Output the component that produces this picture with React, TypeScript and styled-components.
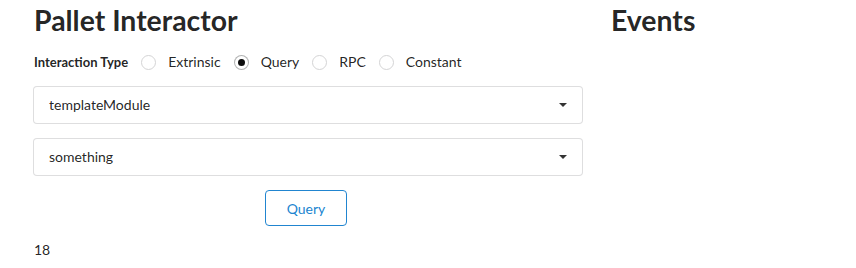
import React from "react";
import styled, { createGlobalStyle } from "styled-components";

const Global = createGlobalStyle`
  html, body { margin: 0; padding: 0; background: #fff; }
  body {
    font-family: Lato, "Helvetica Neue", Arial, sans-serif;
    font-size: 14px;
    line-height: 1.4285em;
    color: rgba(0, 0, 0, 0.87);
  }
  * { box-sizing: border-box; }
`;

const Page = styled.div`
  display: grid;
  grid-template-columns: 550px 1fr;
  column-gap: 27px;
  padding: 2px 0 0 33px;
`;

const Column = styled.div`
  display: flex;
  flex-direction: column;
`;

const Heading = styled.h1`
  margin: 0 0 14px 1px;
  font-size: 28.4px;
  line-height: 36px;
  font-weight: 700;
  color: rgba(0, 0, 0, 0.87);
`;

const InlineFields = styled.div`
  display: flex;
  align-items: center;
  margin: 0 0 14px 1px;
  height: 20px;
`;

const FieldLabel = styled.span`
  font-size: 13px;
  font-weight: 700;
  margin-right: 13px;
`;

const RadioItem = styled.label`
  display: flex;
  align-items: center;
  margin-right: 13px;
  font-size: 14px;
  cursor: pointer;
`;

const RadioCircle = styled.span<{ $checked?: boolean }>`
  width: 15px;
  height: 15px;
  border-radius: 50%;
  border: 1px solid ${(p) => (p.$checked ? "rgba(34,36,38,.35)" : "#d4d4d5")};
  background: #fff;
  display: flex;
  align-items: center;
  justify-content: center;
  margin-right: 12px;
  &::after {
    content: "";
    width: 7px;
    height: 7px;
    border-radius: 50%;
    background: rgba(0, 0, 0, 0.95);
    display: ${(p) => (p.$checked ? "block" : "none")};
  }
`;

const Dropdown = styled.div`
  display: flex;
  align-items: center;
  justify-content: space-between;
  height: 38px;
  padding: 0 15px 0 15px;
  border: 1px solid rgba(34, 36, 38, 0.15);
  border-radius: 4px;
  margin-bottom: 14px;
  font-size: 14px;
  background: #fff;
`;

const Caret = styled.svg`
  width: 8px;
  height: 4px;
`;

const ButtonRow = styled.div`
  display: flex;
  justify-content: center;
  padding-right: 4px;
`;

const BasicButton = styled.button`
  font-family: Lato, "Helvetica Neue", Arial, sans-serif;
  font-size: 14px;
  font-weight: 400;
  height: 36px;
  padding: 0 21px;
  background: #fff;
  color: #2185d0;
  border: 1px solid #2185d0;
  border-radius: 4px;
  cursor: pointer;
`;

const Result = styled.div`
  margin-top: 14px;
  font-size: 14px;
  line-height: 20px;
  padding-left: 1px;
`;

const options = [
  { label: "Extrinsic", checked: false },
  { label: "Query", checked: true },
  { label: "RPC", checked: false },
  { label: "Constant", checked: false },
];

function Select({ value }: { value: string }) {
  return (
    <Dropdown>
      <span>{value}</span>
      <Caret viewBox="0 0 8 4">
        <path d="M0 0 H8 L4 4 Z" fill="rgba(0,0,0,0.8)" />
      </Caret>
    </Dropdown>
  );
}

export default function App() {
  return (
    <>
      <Global />
      <Page>
        <Column>
          <Heading>Pallet Interactor</Heading>
          <InlineFields>
            <FieldLabel>Interaction Type</FieldLabel>
            {options.map((o) => (
              <RadioItem key={o.label}>
                <RadioCircle $checked={o.checked} />
                {o.label}
              </RadioItem>
            ))}
          </InlineFields>
          <Select value="templateModule" />
          <Select value="something" />
          <ButtonRow>
            <BasicButton>Query</BasicButton>
          </ButtonRow>
          <Result>18</Result>
        </Column>
        <Column>
          <Heading>Events</Heading>
        </Column>
      </Page>
    </>
  );
}
